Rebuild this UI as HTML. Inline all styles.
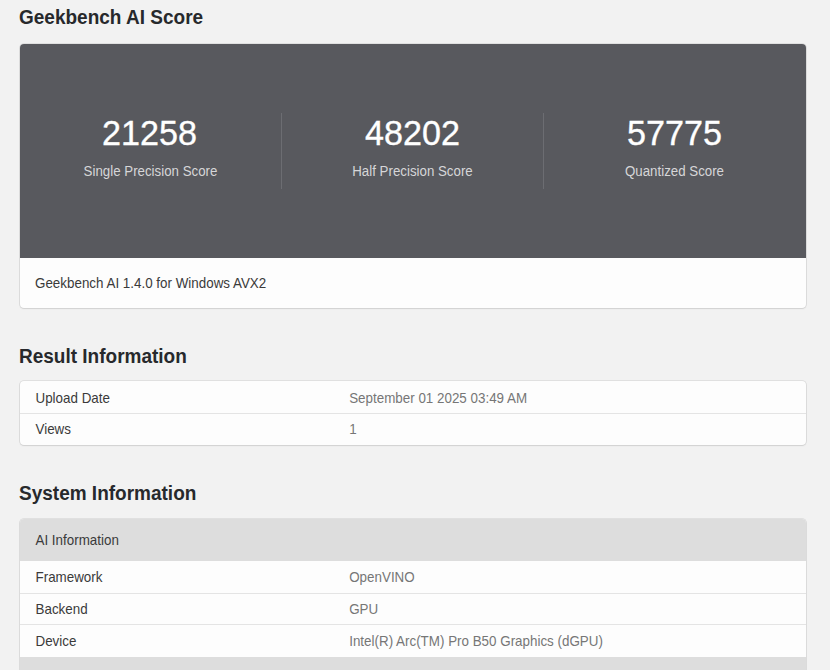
<!DOCTYPE html>
<html><head><meta charset="utf-8">
<style>
html,body{margin:0;padding:0;}
body{width:830px;height:670px;overflow:hidden;background:#f2f2f2;font-family:"Liberation Sans",sans-serif;position:relative;}
.abs{position:absolute;white-space:nowrap;}
h2{position:absolute;margin:0;font-size:19px;font-weight:bold;color:#27292c;line-height:22px;left:19px;white-space:nowrap;transform:scaleY(1.05);}
.card{position:absolute;left:20px;width:786px;top:44px;height:264px;border-radius:4px;background:#fdfdfd;box-shadow:0 0 0 0.8px rgba(0,0,0,0.1),0 1px 2px rgba(0,0,0,0.07);overflow:hidden;}
.dark{position:absolute;left:0;top:0;width:786px;height:214px;background:#58595e;}
.col{position:absolute;top:0;width:261px;height:214px;}
.div{position:absolute;top:69px;height:76px;width:1px;background:#6c6d72;}
.num{position:absolute;left:-0.7px;width:100%;text-align:center;color:#fff;font-size:35.6px;line-height:40px;transform:scaleX(0.96);-webkit-text-stroke:0.35px #fff;}
.lbl{position:absolute;left:0;width:100%;text-align:center;color:#d6d6d8;font-size:13.3px;line-height:16px;transform:scaleY(1.07);}
.foot{position:absolute;left:15px;color:#3a3a3a;font-size:13.4px;line-height:16px;transform:scaleY(1.07);}
.tbl{position:absolute;left:20px;width:786px;border-radius:4px;background:#fdfdfd;box-shadow:0 0 0 0.8px rgba(0,0,0,0.1),0 1px 2px rgba(0,0,0,0.07);overflow:hidden;}
.row{position:absolute;left:0;width:786px;}
.sep{position:absolute;left:0;width:786px;height:1px;background:#e4e4e4;}
.k{position:absolute;left:15.5px;color:#3a3a3a;font-size:13.4px;line-height:16px;white-space:nowrap;transform:scaleY(1.07);}
.v{position:absolute;left:329.2px;color:#767676;font-size:13.4px;line-height:16px;white-space:nowrap;transform:scaleY(1.07);}
.hdr{position:absolute;left:0;width:786px;background:#dddddd;}
</style></head>
<body>
<h2 style="top:7px">Geekbench AI Score</h2>
<div class="card">
  <div class="dark">
    <div class="col" style="left:0"><div class="num" style="top:69.2px;left:-0.6px">21258</div><div class="lbl" style="top:120px">Single Precision Score</div></div>
    <div class="div" style="left:261px"></div>
    <div class="col" style="left:262px"><div class="num" style="top:69.2px;left:-0.45px">48202</div><div class="lbl" style="top:120px">Half Precision Score</div></div>
    <div class="div" style="left:523px"></div>
    <div class="col" style="left:524px"><div class="num" style="top:69.2px;left:0.15px">57775</div><div class="lbl" style="top:120px">Quantized Score</div></div>
  </div>
  <div class="foot" style="top:232px">Geekbench AI 1.4.0 for Windows AVX2</div>
</div>

<h2 style="top:346px">Result Information</h2>
<div class="tbl" style="top:381px;height:64px">
  <div class="k" style="top:9.9px">Upload Date</div><div class="v" style="top:9.9px">September 01 2025 03:49 AM</div>
  <div class="sep" style="top:32px"></div>
  <div class="k" style="top:40.9px">Views</div><div class="v" style="top:40.9px">1</div>
</div>

<h2 style="top:483.3px">System Information</h2>
<div class="tbl" style="top:519px;height:200px">
  <div class="hdr" style="top:0;height:42px"></div>
  <div class="k" style="top:14px">AI Information</div>
  <div class="k" style="top:51px">Framework</div><div class="v" style="top:51px">OpenVINO</div>
  <div class="sep" style="top:74px"></div>
  <div class="k" style="top:83.4px">Backend</div><div class="v" style="top:83.4px">GPU</div>
  <div class="sep" style="top:105px"></div>
  <div class="k" style="top:115px">Device</div><div class="v" style="top:115px">Intel(R) Arc(TM) Pro B50 Graphics (dGPU)</div>
  <div class="hdr" style="top:137.6px;height:43px"></div>
</div>
</body></html>
